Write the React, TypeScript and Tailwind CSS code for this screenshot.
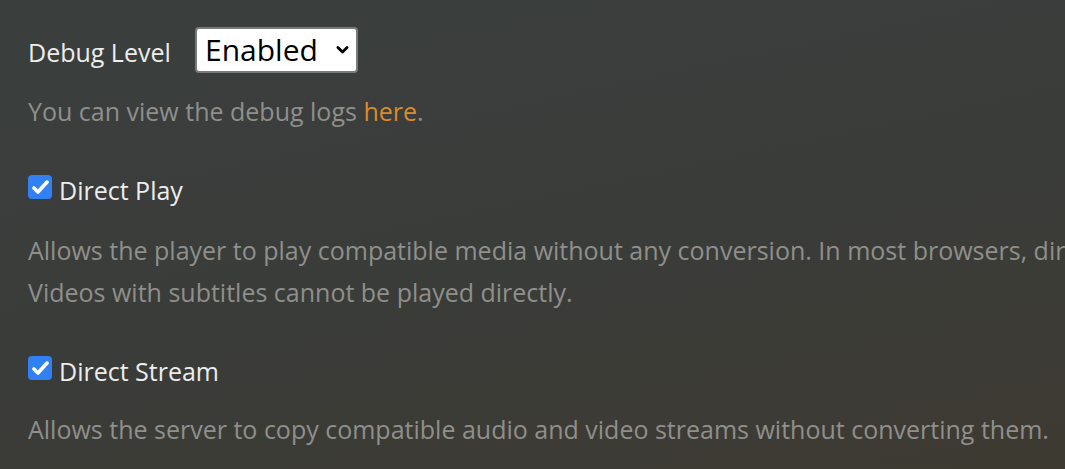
import { useState } from 'react';

function CheckRow({ label, checked, onToggle }: { label: string; checked: boolean; onToggle: () => void }) {
  return (
    <label className="flex items-start gap-[7px] cursor-pointer select-none">
      <span
        onClick={onToggle}
        className={`mt-[1px] flex h-[24px] w-[24px] shrink-0 items-center justify-center rounded-[4px] ${
          checked ? 'bg-[#3181f4]' : 'bg-white'
        }`}
      >
        {checked && (
          <svg viewBox="0 0 24 24" className="h-[21px] w-[21px]" fill="none">
            <path d="M4.5 12.5l4.6 4.6L19.5 5.8" stroke="white" strokeWidth={4.2} strokeLinecap="round" strokeLinejoin="round" />
          </svg>
        )}
      </span>
      <span className="text-[25px] leading-[32px] font-medium text-[#ededed]">{label}</span>
    </label>
  );
}

export default function App() {
  const [directPlay, setDirectPlay] = useState(true);
  const [directStream, setDirectStream] = useState(true);
  const [level, setLevel] = useState('Enabled');

  return (
    <main className="h-screen min-h-[469px] w-full overflow-hidden bg-[linear-gradient(168deg,#3a3f3e_0%,#3a3c39_55%,#3e3a32_100%)] pl-[28px] pt-[27px] font-['Open_Sans',sans-serif] whitespace-nowrap">
      {/* Debug level */}
      <div className="flex items-center">
        <span className="mt-[4px] w-[167px] text-[25px] leading-[32px] font-medium text-[#ededed]">Debug Level</span>
        <div className="relative h-[46px] w-[163px]">
          <select
            value={level}
            onChange={(e) => setLevel(e.target.value)}
            className="h-full w-full appearance-none rounded-[4px] border-2 border-[#7a7a7a] bg-white pl-[8px] text-[30px] leading-[40px] font-medium text-black outline-none"
          >
            <option>Enabled</option>
            <option>Verbose</option>
            <option>Disabled</option>
          </select>
          <svg viewBox="0 0 16 12" className="pointer-events-none absolute right-[8px] top-[18px] h-[10px] w-[15px]" fill="none">
            <path d="M2.5 3l5.5 5.5L13.5 3" stroke="black" strokeWidth={3.4} strokeLinecap="round" strokeLinejoin="round" />
          </svg>
        </div>
      </div>

      <p className="mt-[17px] text-[25px] leading-[42px] font-medium text-[#8f8f8c]">
        You can view the debug logs <a className="text-[#dc8b2c]">here</a>.
      </p>

      {/* Direct Play */}
      <div className="mt-[42px]">
        <CheckRow label="Direct Play" checked={directPlay} onToggle={() => setDirectPlay(!directPlay)} />
      </div>
      <p className="mt-[23px] text-[25px] leading-[42px] font-medium text-[#8f8f8c]">
        Allows the player to play compatible media without any conversion. In most browsers, direct play is limited to H.264 video.
        <br />
        Videos with subtitles cannot be played directly.
      </p>

      {/* Direct Stream */}
      <div className="mt-[42px]">
        <CheckRow label="Direct Stream" checked={directStream} onToggle={() => setDirectStream(!directStream)} />
      </div>
      <p className="mt-[21px] text-[25px] leading-[42px] font-medium text-[#8f8f8c]">
        Allows the server to copy compatible audio and video streams without converting them.
      </p>
    </main>
  );
}
